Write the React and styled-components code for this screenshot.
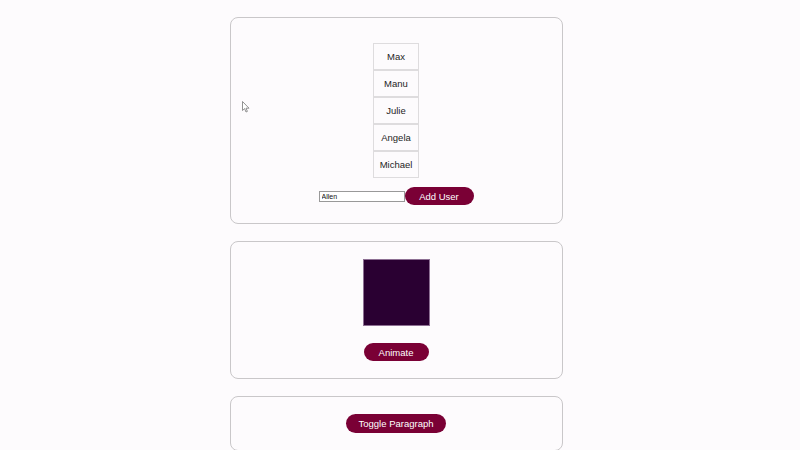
import React, { useState } from "react"
import styled, { createGlobalStyle } from "styled-components"

const GlobalStyle = createGlobalStyle`
    html, body {
        margin: 0;
        padding: 0;
        background-color: #fdfbfd;
        font-family: "Liberation Sans", Arial, sans-serif;
    }
    ::-webkit-scrollbar {
        width: 8px;
    }
    ::-webkit-scrollbar-track {
        background: #f0eef0;
    }
    ::-webkit-scrollbar-thumb {
        background: #bdbcbd;
    }
`

const users = ["Max", "Manu", "Julie", "Angela", "Michael"]

export default function App() {
    const [name, setName] = useState("Allen")

    return (
        <>
            <GlobalStyle />
            <Page>
                <Card>
                    <UserList>
                        {users.map(user => (
                            <UserItem key={user}>{user}</UserItem>
                        ))}
                    </UserList>
                    <Form>
                        <Input value={name} onChange={e => setName(e.target.value)} />
                        <Button $width="69px">Add User</Button>
                    </Form>
                </Card>

                <Card>
                    <Square />
                    <Button $width="65px">Animate</Button>
                </Card>

                <Card>
                    <Button $width="100px" $height="19px">Toggle Paragraph</Button>
                </Card>
            </Page>
            <Cursor width="8" height="12" viewBox="0 0 8 12">
                <path d="M0.5 0.5 L0.5 9.5 L2.6 7.6 L4 11 L5.4 10.4 L4 7.2 L7 7.2 Z" fill="#fff" stroke="#777" strokeWidth="0.8" />
            </Cursor>
        </>
    )
}

const Page = styled.div`
    display: flex;
    flex-direction: column;
    align-items: center;
    gap: 17px;
    padding: 17px 8px 162px 0;
`

const Card = styled.div`
    box-sizing: border-box;
    width: 333px;
    padding: 17px 0;
    border: 1px solid #c9c7c9;
    border-radius: 8px;
    display: flex;
    flex-direction: column;
    align-items: center;
    gap: 17px;

    &:first-child {
        padding-bottom: 18px;
    }
`

const UserList = styled.ul`
    list-style: none;
    margin: 8px 0 -8px;
    padding: 0;
    display: flex;
    flex-direction: column;
`

const UserItem = styled.li`
    box-sizing: border-box;
    width: 46px;
    height: 27px;
    border: 1px solid #dedcde;
    display: flex;
    align-items: center;
    justify-content: center;
    font-size: 9.5px;
    color: #1e1e1e;
`

const Form = styled.div`
    display: flex;
    align-items: center;
`

const Input = styled.input`
    box-sizing: border-box;
    width: 86px;
    height: 11px;
    margin: 0;
    padding: 0 2px;
    border: 1px solid #999;
    background: #fff;
    font-family: "Liberation Sans", Arial, sans-serif;
    font-size: 7px;
    color: #111;
    outline: none;
`

const Button = styled.button`
    width: ${props => props.$width};
    height: ${props => props.$height || "18px"};
    padding: 0;
    border: none;
    border-radius: 10px;
    background-color: #7a0035;
    color: #fff;
    font-family: "Liberation Sans", Arial, sans-serif;
    font-size: 9.5px;
    cursor: pointer;
`

const Square = styled.div`
    box-sizing: border-box;
    width: 67px;
    height: 67px;
    background-color: #2a0032;
    border: 1px solid #8d6f93;
`

const Cursor = styled.svg`
    position: absolute;
    left: 242px;
    top: 101px;
`
